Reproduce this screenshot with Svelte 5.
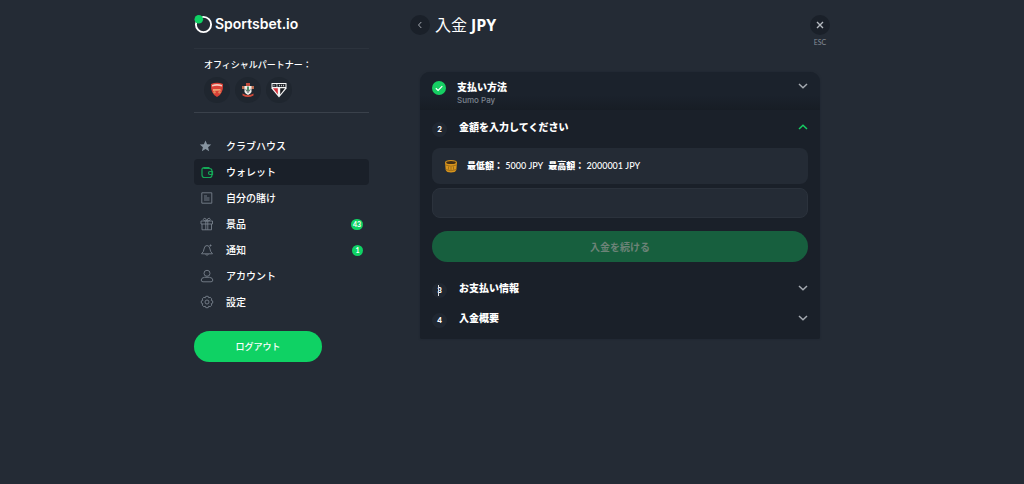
<script>
  const menu = [
    { icon: 'star', label: 'クラブハウス' },
    { icon: 'wallet', label: 'ウォレット', active: true },
    { icon: 'bets', label: '自分の賭け' },
    { icon: 'gift', label: '景品', count: 43 },
    { icon: 'bell', label: '通知', count: 1 },
    { icon: 'user', label: 'アカウント' },
    { icon: 'gear', label: '設定' }
  ];
  let amount = $state('');
</script>

{#snippet chevron(up)}
  <svg class="chevron" class:up width="10" height="6" viewBox="0 0 10 6" aria-hidden="true">
    <path d={up ? 'M1 5L5 1.3L9 5' : 'M1 1L5 4.7L9 1'} />
  </svg>
{/snippet}

<div class="page">
  <aside>
    <a class="logo" href="#home">
      <svg width="20" height="20" viewBox="0 0 20 20" aria-hidden="true">
        <circle cx="9.5" cy="10.5" r="7.6" fill="none" stroke="#fff" stroke-width="1.9" />
        <circle cx="4.8" cy="5.2" r="4.3" fill="#0fd264" />
      </svg>
      <span>Sportsbet.io</span>
    </a>

    <section class="partners">
      <h2>オフィシャルパートナー：</h2>
      <div class="clubs">
        <span class="club">
          <svg width="14" height="16" viewBox="0 0 14 16" aria-hidden="true">
            <path d="M1 2Q7 -.5 13 2Q13.5 12 7 15Q.5 12 1 2Z" fill="#d94137" />
            <path d="M2 3Q7 1.2 12 3V4.6Q7 3 2 4.6Z" fill="#f2c9bd" />
            <path d="M3 7H10L11.5 8.6L3 9Z" fill="#efa073" />
            <circle cx="4.5" cy="10.3" r="1.2" fill="#e08a5c" />
            <circle cx="9.5" cy="10.3" r="1.2" fill="#e08a5c" />
          </svg>
        </span>
        <span class="club">
          <svg width="14" height="16" viewBox="0 0 14 16" aria-hidden="true">
            <path d="M5 1H9V4H5Z" fill="#c34a3c" />
            <path d="M1 4H13V7H1Z" fill="#bd6c50" />
            <path d="M3.5 4H10.5V10Q9.5 12 7 13Q4.5 12 3.5 10Z" fill="#eef0ec" />
            <path d="M6.2 4.5H7.8V9H6.2Z" fill="#27754a" />
            <path d="M4.6 6.5L7 10L9.4 6.5V8L7 11.2L4.6 8Z" fill="#5a6066" />
            <path d="M1.5 11.5Q7 15 12.5 11.5V13.5Q7 16.5 1.5 13.5Z" fill="#cf4a3a" />
          </svg>
        </span>
        <span class="club">
          <svg width="16" height="16" viewBox="0 0 16 16" aria-hidden="true">
            <path d="M.5 1H15.5V6.5L8 15.5L.5 6.5Z" fill="#f4f4f4" />
            <path d="M1.5 2H14.5V5H1.5Z" fill="#22262c" />
            <path d="M3 2.8V4.3M5 2.8H6.5M5.2 4.2H6.8M8.5 2.8V4.3M10.5 2.8V4.3M12.5 2.8V4.3" stroke="#e6e6e6" stroke-width=".8" />
            <path d="M2 6.3H6.8V12.5Z" fill="#d3303a" />
            <path d="M9.2 6.3H14L9.2 12.5Z" fill="#1a1c20" />
          </svg>
        </span>
      </div>
    </section>

    <nav>
      {#each menu as item}
        <a href="#{item.icon}" class:active={item.active}>
          <svg width="14" height="14" viewBox="0 0 14 14" aria-hidden="true">
            {#if item.icon === 'star'}
              <path class="solid" d="M5.5 1.5L7.1 5.2L11.2 5.6L8.1 8.2L9.1 12.3L5.5 10.1L1.9 12.3L2.9 8.2L-.2 5.6L3.9 5.2Z" />
            {:else if item.icon === 'wallet'}
              <path d="M3.5 3.5H9.5A2.5 2.5 0 0 1 12 6V10A2.5 2.5 0 0 1 9.5 12.5H4.5A2.5 2.5 0 0 1 2 10V4.5A2 2 0 0 1 4 2.5H9.5" />
              <path d="M12.5 6.5H10A1.5 1.5 0 0 0 10 9.5H12.5Z" />
            {:else if item.icon === 'bets'}
              <path d="M1.8 1.8H11.8V12.2H1.8ZM4 5H7M4 7H9.5M4 9H9.5" />
            {:else if item.icon === 'gift'}
              <path d="M1 4H12.5V7H1ZM2 7V12.8H11.5V7M5.8 4V12.8M7.8 4V12.8M6.8 4Q3.3 4 3.3 2.5Q3.8 .3 5.8 1.8L6.8 4Q10.3 4 10.3 2.5Q9.8 .3 7.8 1.8Z" />
            {:else if item.icon === 'bell'}
              <path d="M7 2.5Q4.5 2.5 4 6Q4 8.5 1.5 10.8H12.5Q10 8.5 10 6Q9.5 2.5 7 2.5ZM5.5 11Q7 14 8.5 11M10.5 1.5V3.5M9.5 2.5H11.5" />
            {:else if item.icon === 'user'}
              <circle cx="7" cy="4.3" r="3" />
              <path d="M4.5 8.3H9.5Q12.8 8.8 12.8 11Q12.8 12.8 11 12.8H3Q1.2 12.8 1.2 11Q1.2 8.8 4.5 8.3Z" />
            {:else}
              <path d="M5.8 1.3H8.2L8.7 2.8L10.2 2.3L11.8 3.9L11.2 5.3L12.7 5.9V8.1L11.2 8.7L11.8 10.1L10.2 11.7L8.7 11.2L8.2 12.7H5.8L5.3 11.2L3.8 11.7L2.2 10.1L2.8 8.7L1.3 8.1V5.9L2.8 5.3L2.2 3.9L3.8 2.3L5.3 2.8Z" />
              <circle cx="7" cy="7" r="2" />
            {/if}
          </svg>
          <span>{item.label}</span>
          {#if item.count}<b class="count">{item.count}</b>{/if}
        </a>
      {/each}
    </nav>

    <button class="logout" type="button">ログアウト</button>
  </aside>

  <main>
    <header>
      <button class="round" type="button" aria-label="戻る">
        <svg width="6" height="8" viewBox="0 0 6 8" aria-hidden="true"><path d="M4.3 1L1.5 4L4.3 7" /></svg>
      </button>
      <h1>入金 <strong>JPY</strong></h1>
      <div class="close">
        <button class="round" type="button" aria-label="閉じる">
          <svg class="cross" width="8" height="8" viewBox="0 0 8 8" aria-hidden="true"><path d="M1 1L7 7M7 1L1 7" /></svg>
        </button>
        <span>ESC</span>
      </div>
    </header>

    <div class="panel">
      <section class="step done">
        <button class="head" type="button">
          <svg class="tick" width="14" height="14" viewBox="0 0 14 14" aria-hidden="true">
            <circle cx="7" cy="7" r="7" fill="#16cf63" />
            <path d="M3.8 7.2L6.1 9.4L10.3 5.2" fill="none" stroke="#fff" stroke-width="1.2" />
          </svg>
          <span class="title">支払い方法<small>Sumo Pay</small></span>
          {@render chevron(false)}
        </button>
      </section>

      <section class="step open">
        <button class="head" type="button" aria-expanded="true">
          <span class="num">2</span>
          <span class="title">金額を入力してください</span>
          {@render chevron(true)}
        </button>
        <form onsubmit={(e) => e.preventDefault()}>
          <label class="limits" for="amount">
            <svg width="14" height="14" viewBox="0 0 14 14" aria-hidden="true">
              <path d="M1 3.5Q1 1 7 1Q13 1 13 3.5L12.3 11Q11.5 13.5 7 13.5Q2.5 13.5 1.7 11Z" fill="#d9951c" />
              <ellipse cx="7" cy="3.4" rx="4.8" ry="1.5" fill="#402d16" />
              <path d="M1.3 6Q7 8.5 12.7 6M1.7 10.5Q7 13 12.3 10.5M4.5 7.5V10.5M7 8V11M9.5 7.5V10.5" fill="none" stroke="#8a5e18" stroke-width=".7" />
            </svg>
            <span><b>最低額：</b> 5000 JPY</span>
            <span><b>最高額：</b> 2000001 JPY</span>
          </label>
          <input id="amount" type="text" inputmode="decimal" bind:value={amount} />
          <button class="submit" type="submit" disabled>入金を続ける</button>
        </form>
      </section>

      <section class="step">
        <button class="head" type="button">
          <span class="num caret">3</span>
          <span class="title">お支払い情報</span>
          {@render chevron(false)}
        </button>
      </section>

      <section class="step last">
        <button class="head" type="button">
          <span class="num">4</span>
          <span class="title">入金概要</span>
          {@render chevron(false)}
        </button>
      </section>
    </div>
  </main>
</div>

<style>
  :global(body) {
    margin: 0;
    background: #242b35;
  }
  .page {
    display: grid;
    grid-template-columns: 5fr 12fr;
    column-gap: 41px;
    max-width: 636px;
    margin: 0 auto;
    color: #fff;
    font: 10px/16px Lato, "Noto Sans CJK JP", sans-serif;
  }
  *, *::before {
    box-sizing: border-box;
  }
  button, input {
    font: inherit;
    color: inherit;
    border: 0;
    padding: 0;
    background: none;
  }
  a {
    color: inherit;
    text-decoration: none;
  }
  svg {
    flex: none;
    overflow: visible;
  }

  .logo {
    display: flex;
    align-items: center;
    gap: 1px;
    height: 48px;
    font: 600 14px/20px Inter, sans-serif;
  }
  .partners {
    border-top: 1px solid #2c333d;
    border-bottom: 1px solid #3a414b;
    padding: 8px 10px 9px;
  }
  h2 {
    margin: 0 0 4px;
    font-size: 9px;
    line-height: 16px;
    font-weight: 500;
    white-space: nowrap;
  }
  .clubs {
    display: flex;
    gap: 5px;
  }
  .club {
    display: grid;
    place-items: center;
    width: 26px;
    height: 26px;
    border-radius: 50%;
    background: #1f262f;
  }
  nav {
    padding-top: 20px;
  }
  nav a {
    display: flex;
    align-items: center;
    gap: 12px;
    height: 26px;
    padding: 0 6px;
    border-radius: 4px;
    font-weight: 500;
  }
  nav svg {
    fill: none;
    stroke: #78818c;
    stroke-width: 0.9;
  }
  nav .solid {
    fill: #8794a0;
    stroke: none;
  }
  nav .active {
    background: #1a2029;
  }
  nav .active svg {
    stroke: #14a957;
    stroke-width: 1.2;
  }
  .count {
    min-width: 11px;
    margin-left: auto;
    padding: 0 2px;
    border-radius: 6px;
    background: #0fd264;
    font-size: 7px;
    line-height: 11px;
    text-align: center;
  }
  .logout {
    width: 128px;
    height: 31px;
    margin-top: 16px;
    border-radius: 16px;
    background: #0fd264;
    font-size: 9px;
    font-weight: 500;
  }

  header {
    display: flex;
    align-items: flex-start;
    gap: 5px;
    height: 72px;
    padding-top: 15px;
  }
  h1 {
    display: flex;
    flex: 1;
    align-items: center;
    gap: 4px;
    margin: 0;
    font-size: 16px;
    line-height: 20px;
    font-weight: 400;
  }
  h1 strong {
    font-family: "Open Sans", sans-serif;
    font-weight: 700;
  }
  .round {
    display: grid;
    place-items: center;
    width: 20px;
    height: 20px;
    border-radius: 50%;
    background: #1a2029;
  }
  .round svg {
    fill: none;
    stroke: #a3a8b0;
    stroke-width: 1;
  }
  .round .cross {
    stroke: #b4b9bf;
    stroke-width: 1.4;
  }
  .close {
    display: flex;
    flex-direction: column;
    align-items: center;
    width: 20px;
    color: #858c96;
    font-size: 7px;
    line-height: 14px;
  }
  .panel {
    margin: 0 10px;
    border-radius: 10px 10px 2px 2px;
    background: #1a2029;
    box-shadow: 0 0 2px #1e252e;
  }
  .step {
    padding: 0 12px;
  }
  .step.done {
    border-radius: 10px 10px 0 0;
    background: linear-gradient(#1b222c 60%, #171d25);
  }
  .step.last {
    padding-bottom: 6px;
  }
  .head {
    display: flex;
    align-items: center;
    gap: 12px;
    width: 100%;
    height: 30px;
    text-align: left;
  }
  .done .head {
    height: 38px;
    align-items: flex-start;
    gap: 11px;
    padding-top: 7px;
  }
  .open .head {
    height: 38px;
    padding-bottom: 4px;
  }
  .open {
    padding-bottom: 11px;
  }
  .title {
    flex: 1;
    font-weight: 900;
  }
  small {
    display: block;
    color: #7d848f;
    font-family: Inter, sans-serif;
    font-size: 8px;
    line-height: 10px;
    font-weight: 500;
  }
  .tick {
    margin-top: 2px;
  }
  .num {
    position: relative;
    width: 15px;
    height: 15px;
    margin-top: 4px;
    border-radius: 50%;
    background: #202731;
    font-size: 8px;
    line-height: 15px;
    font-weight: 900;
    text-align: center;
  }
  .caret::before {
    content: "";
    position: absolute;
    left: 6px;
    top: 2px;
    width: 1px;
    height: 11px;
    background: #d6d9dd;
  }
  .chevron {
    fill: none;
    stroke: #a5aab1;
    stroke-width: 1.5;
  }
  .done .chevron {
    margin-top: 4px;
  }
  .chevron.up {
    stroke: #16cf63;
  }
  form {
    display: grid;
  }
  .limits {
    display: flex;
    align-items: center;
    gap: 5px;
    height: 36px;
    padding: 0 12px;
    border-radius: 8px;
    background: #242b35;
    font-size: 9px;
    font-weight: 500;
  }
  .limits svg {
    margin-right: 4px;
  }
  .limits b {
    font-weight: 900;
  }
  input {
    width: 100%;
    height: 30px;
    margin-top: 4px;
    padding: 0 12px;
    border: 1px solid #2b323c;
    border-radius: 8px;
    background: #242b35;
  }
  .submit {
    height: 31px;
    margin-top: 13px;
    border-radius: 16px;
    background: #175f3e;
    color: #6d8378;
    font-weight: 700;
  }
</style>
